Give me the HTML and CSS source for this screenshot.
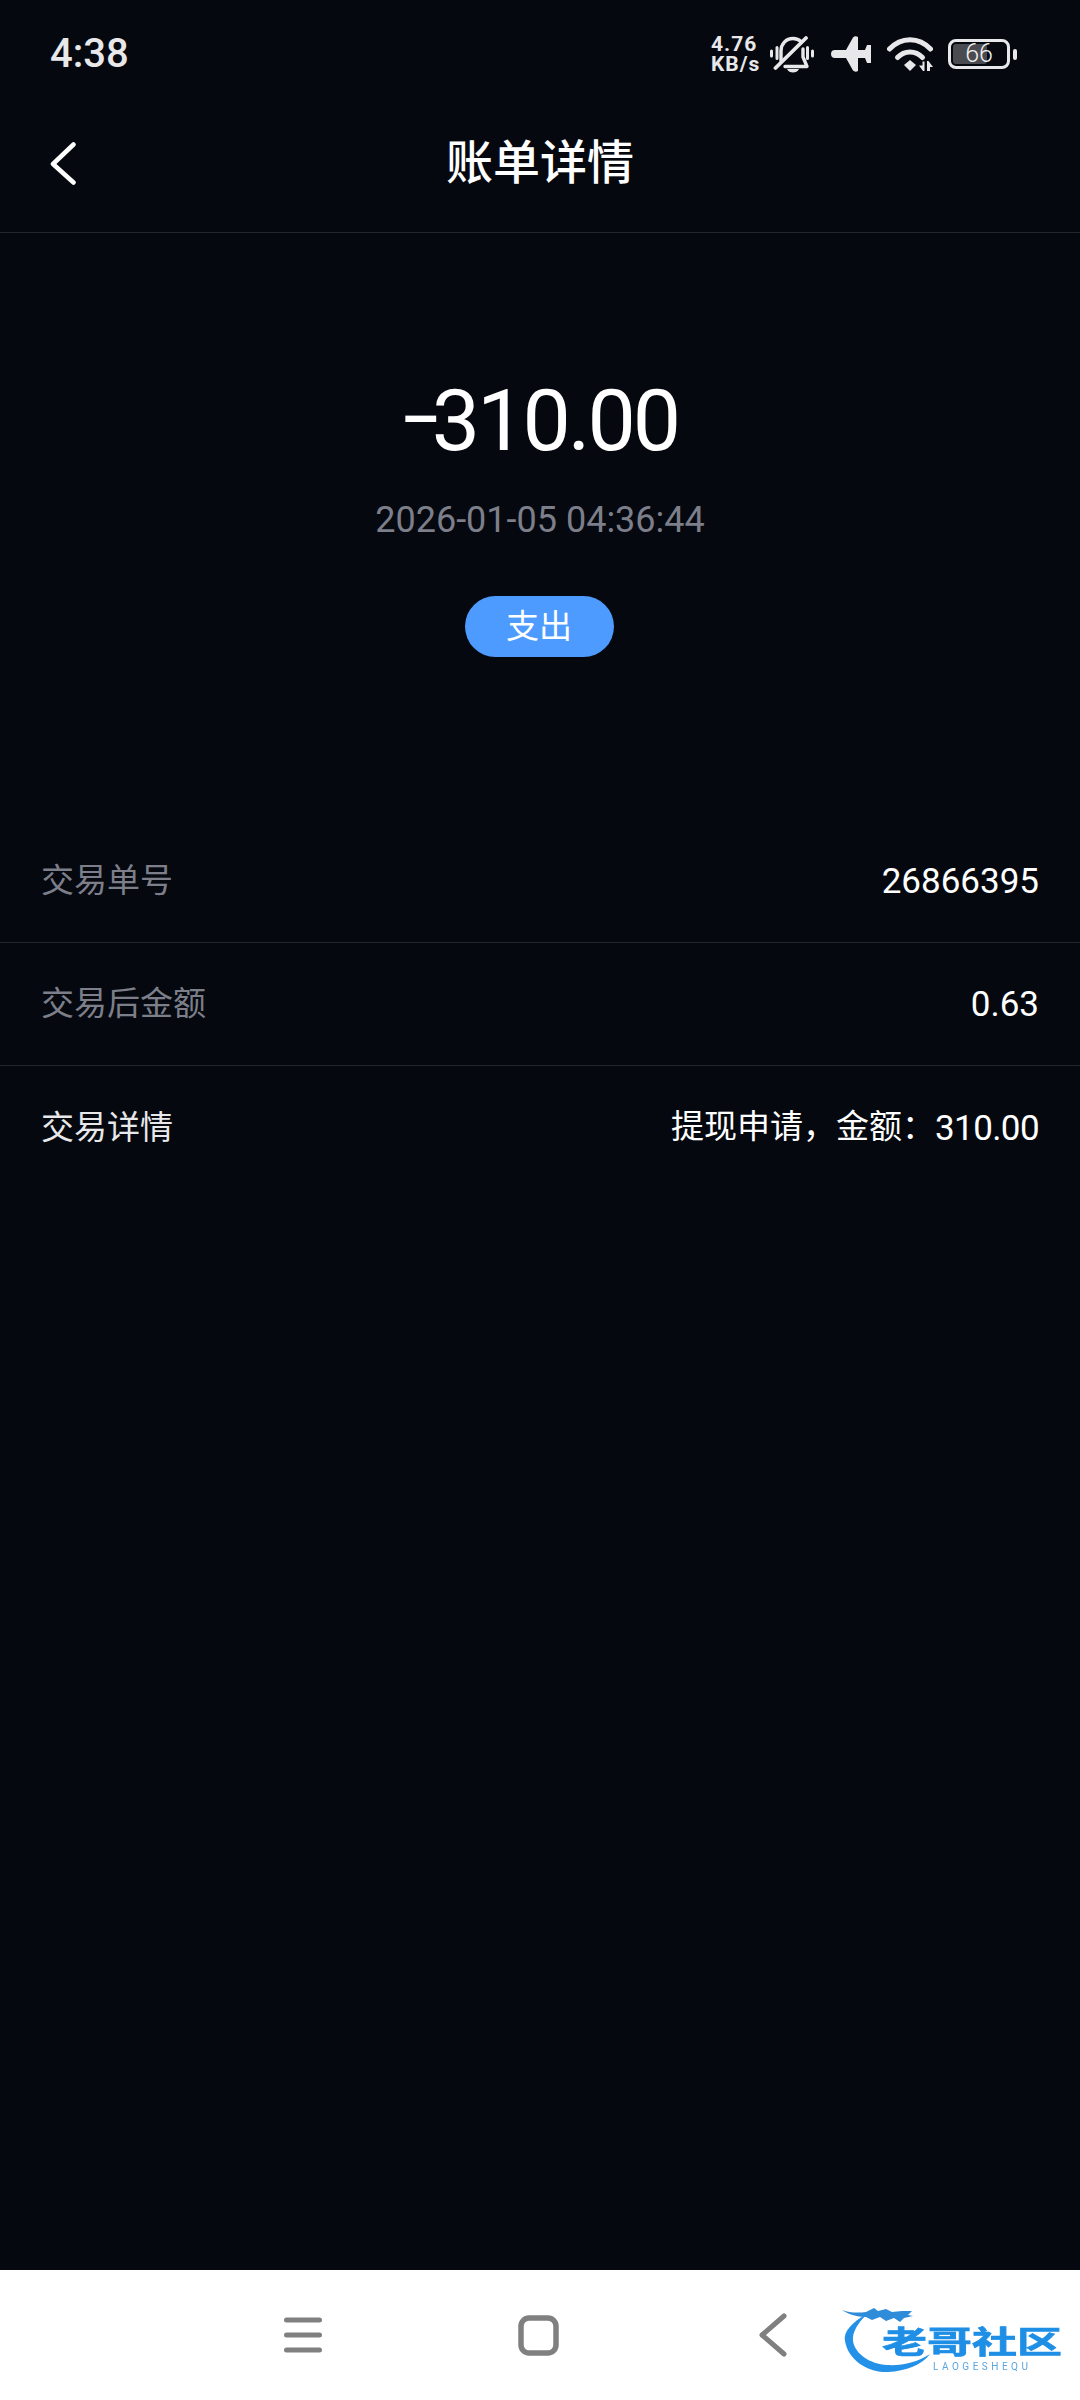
FILE: index.html
```html
<!DOCTYPE html>
<html lang="zh-CN">

<head>
     <meta charset="UTF-8">
     <meta name="viewport" content="width=device-width, initial-scale=1.0">
     <title>账单详情</title>
     <link rel="stylesheet" href="styles.css">
</head>

<body>
     <div class="page">
          <div class="status">
               <div class="time">4:38</div>
               <div class="status-right">
                    <div class="speed">4.76<br>KB/s</div>
                    <svg class="bell" width="44" height="37" viewBox="0 0 44 37" fill="none" stroke="#e8e8ea" stroke-linecap="round" stroke-linejoin="round">
                         <path stroke-width="3.400" d="M11 25V15C11 8 16 2.500 23 2.500c3 0 6 1 8 3M33 13v8l4 9.500H15" />
                         <path stroke-width="3.800" d="M36 2 5.500 32" />
                         <path stroke-width="3" d="M1.500 15v5M7 11.500v11M37.500 11.500v11M42.500 15v5" />
                         <path fill="#e8e8ea" stroke="none" d="M17 33h12c-1 2.500-3.500 3.500-6 3.500s-5-1-6-3.500z" />
                    </svg>
                    <svg class="plane" width="40" height="36" viewBox="0 0 40 36">
                         <path fill="#e8e8ea" d="M4 14H15L22 1.500Q24-.5 27 1V14H34L36 9H40V27H36L34 22H27V35Q24 36.500 22 34.500L15 22H4A4 4 0 0 1 4 14Z" />
                    </svg>
                    <svg class="wifi" width="46" height="34" viewBox="0 0 46 34" fill="none" stroke="#e8e8ea" stroke-linecap="round">
                         <path stroke-width="5" d="M2.500 12C14-.5 32-.5 43.500 12" />
                         <path stroke-width="5" d="M10.500 20.500C17.500 13 28.500 13 35.500 20.500" />
                         <path fill="#e8e8ea" stroke="none" d="M23 23 29 28 23 34 17 28z" />
                         <path fill="#e8e8ea" stroke="none" d="M35.500 24.500v4h-3.500l4 5.500h1.500v-9.500zM40 34v-10h1.500l4.500 6h-3v4z" />
                    </svg>
                    <div class="battery">
                         <div class="battery-body">
                              <div class="battery-fill"></div>
                              <span class="battery-num">66</span>
                         </div>
                         <div class="battery-nub"></div>
                    </div>
               </div>
          </div>

          <div class="topbar">
               <svg class="back" width="26" height="43" viewBox="0 0 26 43" fill="none" stroke="#fff" stroke-width="4.500" stroke-linecap="round" stroke-linejoin="round">
                    <path d="M23.500 2.500 3 22l20.500 18.500" />
               </svg>
               <div class="title">账单详情</div>
          </div>

          <div class="summary">
               <div class="amount"><span class="amount-sign">-</span>310.00</div>
               <div class="date">2026-01-05 04:36:44</div>
               <div class="tag">支出</div>
          </div>

          <div class="rows">
               <div class="row">
                    <span class="label">交易单号</span>
                    <span class="value">26866395</span>
               </div>
               <div class="row">
                    <span class="label">交易后金额</span>
                    <span class="value">0.63</span>
               </div>
               <div class="row">
                    <span class="label label-light">交易详情</span>
                    <span class="value"><span class="value-cn">提现申请，金额：</span><span class="value-num">310.00</span></span>
               </div>
          </div>
     </div>

     <div class="navbar">
          <div class="nav-icon">
               <svg width="38" height="36" viewBox="0 0 38 36" fill="none" stroke="#808080" stroke-width="5" stroke-linecap="round">
                    <path d="M2.500 3h33M2.500 18h33M2.500 33h33" />
               </svg>
          </div>
          <div class="nav-icon">
               <svg width="41" height="41" viewBox="0 0 41 41" fill="none" stroke="#808080" stroke-width="5.500">
                    <rect x="3" y="3" width="35" height="35" rx="8" />
               </svg>
          </div>
          <div class="nav-icon">
               <svg width="28" height="44" viewBox="0 0 28 44" fill="none" stroke="#808080" stroke-width="5" stroke-linecap="round" stroke-linejoin="round">
                    <path d="M25 3 3 22l22 19" />
               </svg>
          </div>

          <div class="logo">
               <svg class="logo-dragon" width="100" height="76" viewBox="0 0 100 76">
                    <path fill="#2391e8" d="M25 6C10 14 1 24 3 33 6 52 26 65 46 64 64 63 80 57 88 46 76 54 60 58 45 57 28 56 13 46 11 33 10 24 16 15 25 6z" />
                    <path fill="#2f8cd8" d="M0 2C8 5 16 5 24 4L32 0 36 3 44 1 50 4 60 3 70 3 66 7 71 8 62 10 58 14 52 10 44 13 38 9 30 12 24 9C14 9 6 6 0 2z" />
               </svg>
               <div class="logo-name">老哥社区</div>
               <div class="logo-en">LAOGESHEQU</div>
          </div>
     </div>
</body>

</html>
```

FILE: styles.css
```css
* {
     box-sizing: border-box;
}

body {
     margin: 0;
     height: 2400px;
     display: flex;
     flex-direction: column;
     background: #05080f;
     color: #fff;
     font-family: Roboto, "Noto Sans CJK SC", sans-serif;
}

.page {
     flex: 1;
}

/* status bar */

.status {
     height: 94px;
     padding: 32px 63px 0 50px;
     display: flex;
     justify-content: space-between;
     align-items: flex-start;
}

.time {
     font-size: 40px;
     line-height: 44px;
     font-weight: 500;
     color: #e8e8ea;
}

.status-right {
     height: 44px;
     display: flex;
     align-items: center;
}

.speed {
     width: 50px;
     margin-right: 9px;
     font-size: 21px;
     line-height: 20px;
     font-weight: 700;
     letter-spacing: 1px;
     white-space: nowrap;
     color: #e8e8ea;
}

.bell {
     margin-right: 17px;
}

.plane {
     margin-right: 16px;
}

.wifi {
     margin-right: 15px;
}

.battery {
     display: flex;
     align-items: center;
}

.battery-body {
     position: relative;
     width: 62px;
     height: 30px;
     padding: 2px;
     border: 3px solid #e8e8ea;
     border-radius: 8px;
}

.battery-fill {
     width: 66%;
     height: 100%;
     background: #4a4b50;
     border-radius: 3px;
}

.battery-num {
     position: absolute;
     left: 0;
     right: 0;
     top: -3px;
     line-height: 30px;
     text-align: center;
     font-size: 25px;
     font-weight: 300;
     color: #f0f0f0;
}

.battery-nub {
     width: 4px;
     height: 11px;
     margin-left: 3px;
     background: #e8e8ea;
     border-radius: 2px;
}

/* title bar */

.topbar {
     position: relative;
     height: 139px;
     display: flex;
     align-items: center;
     justify-content: center;
     border-bottom: 1px solid #24262e;
}

.back {
     position: absolute;
     left: 50px;
     top: 48px;
}

.title {
     font-size: 47px;
     line-height: 60px;
     font-weight: 500;
}

/* amount block */

.summary {
     display: flex;
     flex-direction: column;
     align-items: center;
     padding-top: 138px;
     margin-bottom: 163px;
}

.amount {
     margin-left: 1px;
     font-size: 86px;
     line-height: 100px;
     letter-spacing: -3px;
}

.amount-sign {
     display: inline-block;
     margin-right: 8px;
     transform: translateY(-5px) scaleX(1.5);
     transform-origin: left center;
}

.date {
     margin-top: 27px;
     font-size: 36px;
     line-height: 44px;
     color: #7c7f8a;
}

.tag {
     width: 149px;
     height: 61px;
     margin-top: 54px;
     margin-right: 2px;
     display: flex;
     align-items: center;
     justify-content: center;
     background: #4d9bff;
     border-radius: 31px;
     font-size: 33px;
     line-height: 44px;
}

/* detail rows */

.row {
     height: 123px;
     padding: 0 41px;
     display: flex;
     justify-content: space-between;
     align-items: center;
     border-bottom: 1px solid #24262e;
}

.row:last-child {
     border-bottom: none;
}

.label {
     font-size: 33px;
     line-height: 44px;
     color: #7c7f8a;
}

.label-light {
     color: #e8e8ea;
}

.value {
     margin-top: 2px;
     font-size: 35px;
     line-height: 44px;
     color: #fff;
}

.value-cn {
     position: relative;
     top: -2px;
     font-size: 33px;
}

.value-num {
     letter-spacing: -0.6px;
}

/* bottom nav */

.navbar {
     position: relative;
     height: 130px;
     padding-right: 4px;
     display: flex;
     align-items: center;
     justify-content: center;
     gap: 175px;
     background: #fff;
}

.nav-icon {
     width: 60px;
     display: flex;
     justify-content: center;
}

.logo {
     position: absolute;
     left: 842px;
     top: 38px;
     width: 225px;
     height: 76px;
     filter: blur(0.6px);
}

.logo-dragon {
     position: absolute;
     left: 0;
     top: 0;
     overflow: visible;
}

.logo-name {
     position: absolute;
     left: 40px;
     top: 10px;
     font-size: 45px;
     line-height: 50px;
     font-weight: 700;
     white-space: nowrap;
     color: #1f8fe6;
     transform: scaleY(0.68);
     -webkit-text-stroke: 1px #1f8fe6;
}

.logo-en {
     position: absolute;
     left: 91px;
     top: 53px;
     font-size: 10px;
     line-height: 12px;
     letter-spacing: 3.500px;
     color: #5aa5e0;
}
```
